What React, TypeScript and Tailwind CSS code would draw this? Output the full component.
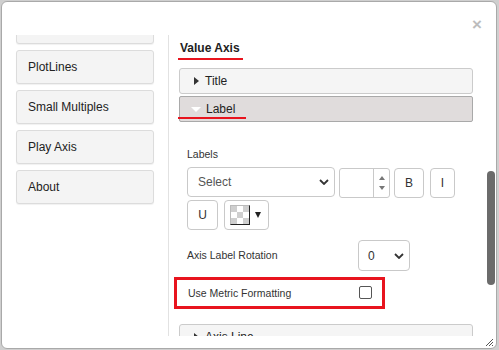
import React from "react";

const sideItems = ["", "PlotLines", "Small Multiples", "Play Axis", "About"];

function Chevron({ className = "" }: { className?: string }) {
  return (
    <svg viewBox="0 0 10 6" className={className} width="10" height="6">
      <path d="M1 1 L5 5 L9 1" fill="none" stroke="#333" strokeWidth="1.8" />
    </svg>
  );
}

function SideButton({ label, first }: { label: string; first?: boolean }) {
  return (
    <div
      className={`h-[34px] w-[138px] rounded-[3px] border border-[#dcdcdc] bg-[#f4f4f4] shadow-[0_1px_1px_rgba(0,0,0,0.06)] pl-[11px] flex items-center text-[12px] text-[#222] ${
        first ? "-mt-[25px]" : ""
      }`}
    >
      {label}
    </div>
  );
}

function Checker() {
  const cells = [1, 0, 1, 0, 1, 0, 1, 0, 1];
  return (
    <div className="w-[20px] h-[20px] grid grid-cols-3 grid-rows-3 border border-[#222] border-l-[#bbb] border-t-[#bbb]">
      {cells.map((c, i) => (
        <div key={i} className={c ? "bg-[#cfcfcf]" : "bg-white"} />
      ))}
    </div>
  );
}

export default function App() {
  return (
    <div
      className="w-[499px] h-[350px] bg-[#cfcfcf] p-[1px] overflow-hidden"
      style={{ fontFamily: '"Liberation Sans", Arial, sans-serif' }}
    >
      <div className="w-[496px] h-[348px] bg-white border border-[#a9a9a9] rounded-[6px] flex flex-col overflow-hidden">
        {/* header */}
        <div className="h-[33px] shrink-0 flex justify-end pr-[14px] pt-[14px]">
          <span className="text-[17px] leading-[17px] font-bold text-[#bdbdbd]">×</span>
        </div>

        {/* body */}
        <div className="h-[301px] shrink-0 flex overflow-hidden">
          {/* sidebar */}
          <div className="w-[167px] shrink-0 border-r border-[#e2e2e2] pl-[14px] flex flex-col gap-[6px]">
            {sideItems.map((s, i) => (
              <SideButton key={i} label={s} first={i === 0} />
            ))}
          </div>

          {/* content */}
          <div className="flex-1 pl-[10px] pr-[14px] pt-[6px] text-[#333]">
            <div className="text-[12px] leading-[14px] font-bold text-[#222] pl-[1px]">Value Axis</div>
            <div className="w-[65px] h-[2px] bg-[#e8141e] -ml-[1px] mt-[3px]" />

            <div className="mt-[8px] h-[26px] rounded-[3px] border border-[#cbcbcb] bg-[#f5f5f5] flex items-center pl-[14px] gap-[6px] text-[12px] text-[#222]">
              <span className="w-0 h-0 border-y-[4px] border-y-transparent border-l-[5px] border-l-[#333]" />
              <span>Title</span>
            </div>

            <div className="relative mt-[2px] h-[26px] rounded-[2px] border border-[#a9a9a9] bg-[#e0dcdc] flex items-center pl-[11px] gap-[5px] text-[12px] text-[#222]">
              <span className="w-0 h-0 border-x-[5px] border-x-transparent border-t-[5px] border-t-white" />
              <span>Label</span>
              <div className="absolute left-[-2px] top-[20px] w-[68px] h-[2px] bg-[#e8141e]" />
            </div>

            <div className="pl-[8px]">
              <div className="mt-[26px] text-[10.5px] leading-[13px] text-[#333]">Labels</div>
              <div className="mt-[6px] flex gap-[4px] items-start">
                <div className="w-[148px] h-[30px] rounded-[4px] border border-[#c9c9c9] flex items-center justify-between pl-[10px] pr-[5px] text-[12px] text-[#555]">
                  <span>Select</span>
                  <Chevron />
                </div>
                <div className="mt-[1px] w-[51px] h-[30px] rounded-[3px] border border-[#c9c9c9] flex">
                  <div className="flex-1" />
                  <div className="w-[16px] border-l border-[#c9c9c9] flex flex-col items-center justify-center gap-[6px]">
                    <span className="w-0 h-0 border-x-[3.5px] border-x-transparent border-b-[4px] border-b-[#777]" />
                    <span className="w-0 h-0 border-x-[3.5px] border-x-transparent border-t-[4px] border-t-[#777]" />
                  </div>
                </div>
                <div className="mt-[1px] w-[30px] h-[30px] rounded-[4px] border border-[#c9c9c9] flex items-center justify-center text-[12px] text-[#333]">
                  B
                </div>
                <div className="mt-[1px] ml-[2px] w-[25px] h-[30px] rounded-[4px] border border-[#c9c9c9] flex items-center justify-center text-[12px] text-[#333]">
                  I
                </div>
              </div>

              <div className="mt-[2px] flex gap-[6px]">
                <div className="w-[31px] h-[30px] rounded-[4px] border border-[#c9c9c9] flex items-center justify-center text-[12px] text-[#333]">
                  U
                </div>
                <div className="w-[45px] h-[30px] rounded-[4px] border border-[#c9c9c9] flex items-center pl-[5px] gap-[5px]">
                  <Checker />
                  <span className="w-0 h-0 border-x-[3.5px] border-x-transparent border-t-[6px] border-t-[#222]" />
                </div>
              </div>

              <div className="mt-[10px] flex items-center">
                <span className="w-[171px] text-[10.5px] text-[#333]">Axis Label Rotation</span>
                <div className="w-[52px] h-[31px] rounded-[4px] border border-[#c9c9c9] flex items-center justify-between pl-[9px] pr-[5px] text-[12px] text-[#333]">
                  <span>0</span>
                  <Chevron />
                </div>
              </div>
            </div>

            <div className="mt-[6px] -ml-[5px] w-[211px] h-[32px] border-[3px] border-[#e8141e] flex items-center pl-[11px]">
              <span className="w-[171px] text-[10.5px] text-[#333] mt-[2px]">Use Metric Formatting</span>
              <span className="w-[13px] h-[13px] rounded-[2px] border border-[#555] mt-[-1px]" />
            </div>

            <div className="mt-[15px] h-[26px] rounded-[3px] border border-[#cbcbcb] bg-[#f5f5f5] flex items-center pl-[14px] gap-[6px] text-[12px] text-[#222]">
              <span className="w-0 h-0 border-y-[4px] border-y-transparent border-l-[5px] border-l-[#333]" />
              <span>Axis Line</span>
            </div>
          </div>

          {/* scrollbar */}
          <div className="w-[9px] shrink-0 pt-[136px] pr-[1px]">
            <div className="w-[8px] h-[114px] rounded-full bg-[#6b6b6b]" />
          </div>
        </div>

        {/* footer with resize grip */}
        <div className="flex-1 flex justify-end items-end pr-[2px] pb-[1px]">
          <svg width="10" height="10" viewBox="0 0 10 10">
            <path d="M9 2 L2 9 M9 5 L5 9 M9 8 L8 9" stroke="#555" strokeWidth="1" />
          </svg>
        </div>
      </div>
    </div>
  );
}
